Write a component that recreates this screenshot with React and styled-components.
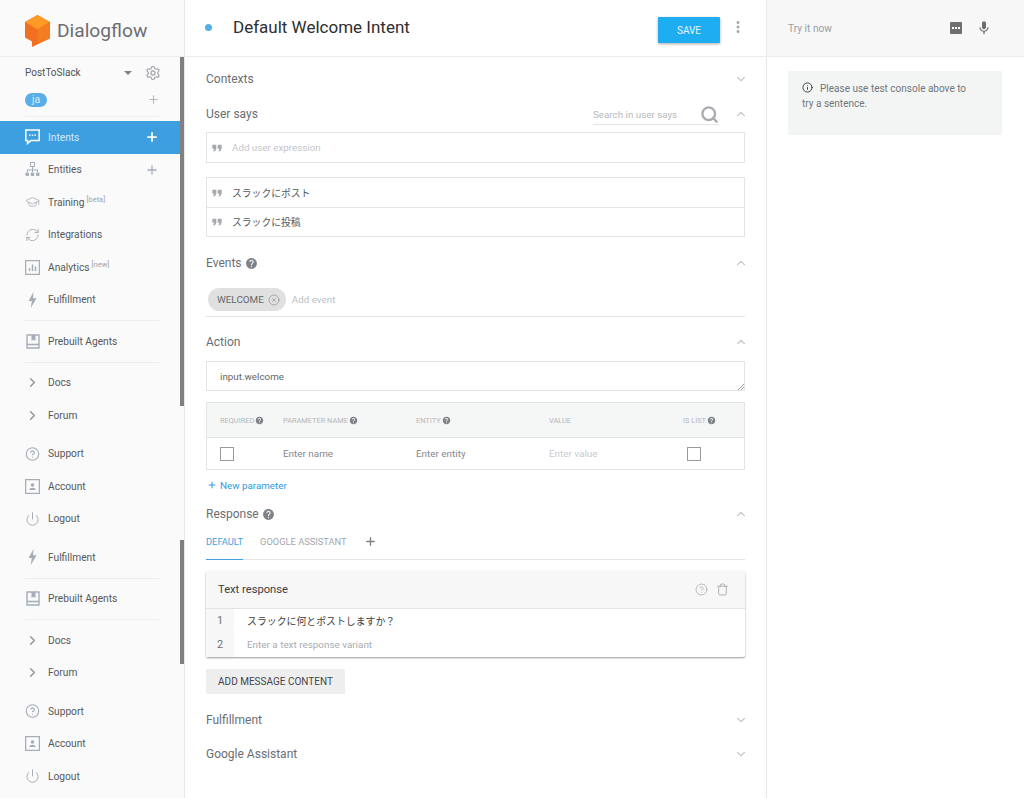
import React from 'react';
import styled, { createGlobalStyle } from 'styled-components';
import { ChevronDown, ChevronUp, ChevronRight, CircleHelp, Power, Search, RefreshCw, GraduationCap, Plus, Trash, CircleX, Info, Settings } from 'lucide-react';
import { MdHelp, MdMic, MdMoreVert, MdFormatQuote } from 'react-icons/md';

const GlobalStyle = createGlobalStyle`
  html, body {
    margin: 0;
    padding: 0;
    height: 100%;
    overflow: hidden;
    background: #ffffff;
    font-family: Roboto, "Noto Sans CJK JP", sans-serif;
  }
  * { box-sizing: border-box; }
`;

const Page = styled.div`
  display: flex;
  width: 1024px;
  height: 798px;
  overflow: hidden;
`;

const Sidebar = styled.aside`
  position: relative;
  width: 185px;
  flex-shrink: 0;
  background: #fafafa;
  border-right: 1px solid #e8e8e8;
`;

const Logo = styled.div`
  display: flex;
  align-items: center;
  gap: 7px;
  height: 57px;
  padding: 5px 0 0 25px;
  border-bottom: 1px solid #ececec;
  font-size: 19.2px;
  color: #6b6e72;
`;

const AgentRow = styled.div`
  display: flex;
  align-items: center;
  height: ${p => p.$h}px;
  margin: 0 25px;
  padding-bottom: ${p => (p.$line ? '5px' : '0')};
  font-size: 10px;
  color: #4f5357;
  border-bottom: ${p => (p.$line ? '1px solid #ececec' : 'none')};
`;

const AgentName = styled.span`
  flex: 1;
`;

const Caret = styled.span`
  width: 0;
  height: 0;
  margin-right: 13px;
  border-left: 4px solid transparent;
  border-right: 4px solid transparent;
  border-top: 4px solid #7f8388;
`;

const GearIcon = styled(Settings)`
  margin-right: -2px;
`;

const LangPlus = styled(Plus)`
  margin-right: -1px;
`;

const LangPill = styled.span`
  width: 22px;
  height: 14px;
  margin-right: auto;
  border-radius: 7px;
  background: #5aaee8;
  color: #d9edfb;
  font-size: 10.5px;
  line-height: 14px;
  text-align: center;
`;

const NavRow = styled.div`
  display: flex;
  align-items: center;
  height: 32.5px;
  padding: 0 25px;
  background: ${p => (p.$active ? '#3d9fdf' : 'transparent')};
  color: ${p => (p.$active ? '#d5e9f7' : '#54585c')};
  font-size: 10.2px;
`;

const NavIcon = styled.span`
  display: flex;
  align-items: center;
  justify-content: center;
  width: 15px;
  height: 16px;
  margin-right: 8px;
  color: ${p => (p.$active ? '#ffffff' : '#a6adb8')};
`;

const NavLabel = styled.span`
  flex: 1;
  margin-top: ${p => (p.$low ? '1px' : '0')};
`;

const Sup = styled.sup`
  margin-left: 2px;
  font-size: 7.5px;
  line-height: 0;
  color: #a0a4a8;
  vertical-align: 4px;
`;

const NavDivider = styled.div`
  height: 1px;
  margin: 4px 25px;
  background: #ececec;
`;

const NavGap = styled.div`
  height: ${p => p.$h}px;
`;

const ScrollThumb = styled.div`
  position: absolute;
  right: 0;
  top: ${p => p.$top}px;
  width: 4px;
  height: ${p => p.$h}px;
  background: #808080;
`;

const Main = styled.main`
  width: 582px;
  flex-shrink: 0;
  display: flex;
  flex-direction: column;
  border-right: 1px solid #e8e8e8;
`;

const MainHeader = styled.header`
  display: flex;
  align-items: center;
  height: 57px;
  padding: 0 21px 2px 20px;
  border-bottom: 1px solid #ececec;
`;

const Dot = styled.span`
  width: 7px;
  height: 7px;
  margin-right: 21px;
  border-radius: 50%;
  background: #5aaee8;
`;

const Title = styled.h1`
  flex: 1;
  margin: 0;
  font-size: 17px;
  font-weight: 400;
  color: #2e2e2e;
`;

const SaveButton = styled.button`
  width: 62px;
  height: 26px;
  margin: 6px 9px 0 0;
  border: 0;
  border-radius: 1px;
  background: #1fadf2;
  color: #e6f5fd;
  font-family: inherit;
  font-size: 10px;
  box-shadow: 0 1px 3px rgba(0, 0, 0, 0.35);
`;

const MoreIcon = styled(MdMoreVert)`
  margin-right: -2px;
`;

const Body = styled.div`
  padding: 0 21px;
`;

const SectionHead = styled.div`
  display: flex;
  align-items: center;
  height: 20px;
  margin-top: ${p => p.$mt || 0}px;
  font-size: 12px;
  color: #6a6e73;
`;

const SectionTitle = styled.span`
  flex: 1;
  display: flex;
  align-items: center;
  gap: 3px;
`;

const SectionArrow = styled.span`
  display: flex;
  margin-right: -3px;
  color: #c8cacd;
`;

const SearchBox = styled.div`
  display: flex;
  align-items: center;
  justify-content: space-between;
  width: 126px;
  height: 20px;
  margin: 2px 15px 0 0;
  border-bottom: 1px solid #e6e6e6;
  font-size: 9.8px;
  color: #b5b8bc;
`;

const Box = styled.div`
  border: 1px solid #e4e4e4;
  margin-top: ${p => p.$mt || 0}px;
`;

const QuoteRow = styled.div`
  display: flex;
  align-items: center;
  gap: 7px;
  height: 29px;
  padding-left: 2px;
  font-size: 9.8px;
  color: ${p => (p.$ghost ? '#c4c6ca' : '#55585c')};
  border-top: ${p => (p.$line ? '1px solid #e4e4e4' : '0')};
  svg { color: #a6a9ae; }
`;

const EventLine = styled.div`
  display: flex;
  align-items: center;
  height: 29px;
  margin-top: 15px;
  padding: 0 0 5px 2px;
  border-bottom: 1px solid #e6e6e6;
`;

const Chip = styled.span`
  display: flex;
  align-items: center;
  gap: 4px;
  height: 23px;
  padding: 0 6px 0 9px;
  border-radius: 12px;
  background: #e0e0e0;
  font-size: 9.9px;
  color: #65696e;
`;

const Ghost = styled.span`
  margin-left: 6px;
  font-size: 9.8px;
  color: #bdbfc3;
`;

const ActionInput = styled.div`
  position: relative;
  display: flex;
  align-items: flex-start;
  height: 30px;
  margin-top: 9px;
  padding: 9px 13px 0;
  border: 1px solid #e4e4e4;
  font-size: 9.8px;
  color: #63676b;
`;

const Grip = styled.svg`
  position: absolute;
  right: 0;
  bottom: 0;
`;

const ParamGrid = styled.div`
  display: grid;
  grid-template-columns: 63px 133px 133px 134px 1fr;
  align-items: center;
  height: ${p => p.$h}px;
  padding-left: 13px;
  background: ${p => (p.$head ? '#f5f6f6' : '#ffffff')};
  border-bottom: ${p => (p.$head ? '1px solid #e4e4e4' : '0')};
`;

const ParamHead = styled.span`
  display: flex;
  align-items: center;
  gap: 1px;
  font-size: 7.4px;
  color: #b4b7bb;
`;

const ParamCell = styled.span`
  font-size: 9.9px;
  color: ${p => (p.$light ? '#c9cbce' : '#85888d')};
`;

const Checkbox = styled.span`
  display: block;
  width: 14px;
  height: 14px;
  margin-left: ${p => p.$ml || 0}px;
  border: 1px solid #9a9a9a;
`;

const NewParam = styled.div`
  display: flex;
  align-items: center;
  gap: 3px;
  height: 30px;
  padding-left: 1px;
  font-size: 9.8px;
  color: #2a9be6;
`;

const Tabs = styled.div`
  display: flex;
  align-items: center;
  height: 31px;
  margin-top: 5px;
  border-bottom: 1px solid #e4e4e4;
  font-size: 9.3px;
  color: #a3a6ab;
`;

const Tab = styled.span`
  display: flex;
  align-items: center;
  height: 31px;
  margin-bottom: -1px;
  padding-bottom: 6px;
  margin-right: ${p => p.$mr}px;
  color: ${p => (p.$active ? '#3d9fdf' : 'inherit')};
  border-bottom: ${p => (p.$active ? '1px solid #3d9fdf' : '0')};
`;

const TabPlus = styled(Plus)`
  margin-bottom: 6px;
  color: #7e8388;
`;

const Card = styled.section`
  margin-top: 11px;
  border-radius: 2px;
  box-shadow: 0 1px 2px rgba(0, 0, 0, 0.4);
`;

const CardHead = styled.div`
  display: flex;
  align-items: center;
  gap: 8px;
  height: 38px;
  padding: 0 16px 0 12px;
  background: #f7f7f7;
  border-bottom: 1px solid #e4e4e4;
  font-size: 11.2px;
  color: #3b3e41;
  svg { color: #a5a8ad; }
`;

const CardTitle = styled.span`
  flex: 1;
`;

const VariantRow = styled.div`
  display: flex;
  height: 24px;
  font-size: 9.9px;
  color: ${p => (p.$ghost ? '#a9acb0' : '#3b3e41')};
`;

const VariantNum = styled.span`
  width: 28px;
  padding: 5px 0 0 11px;
  background: #f7f7f7;
  color: #6f7276;
  font-size: 11px;
`;

const VariantText = styled.span`
  padding: ${p => p.$top}px 0 0 13px;
  line-height: 14px;
`;

const AddButton = styled.button`
  display: block;
  width: 139px;
  height: 25px;
  margin-top: 12px;
  border: 0;
  background: #eeeeee;
  color: #44474a;
  font-family: inherit;
  font-size: 10px;
`;

const Aside = styled.aside`
  flex: 1;
  background: #ffffff;
`;

const TryBar = styled.div`
  display: flex;
  align-items: center;
  height: 57px;
  padding: 0 32px 0 21px;
  background: #f7f7f7;
  border-bottom: 1px solid #ececec;
  font-size: 10.2px;
  color: #9a9da1;
`;

const TryLabel = styled.span`
  flex: 1;
`;

const KeyIcon = styled.span`
  display: flex;
  align-items: center;
  justify-content: center;
  gap: 1px;
  width: 12px;
  height: 12px;
  margin-right: 14px;
  border-radius: 1px;
  background: #6f6f6f;
  i {
    width: 2px;
    height: 2px;
    background: #fff;
  }
`;

const Notice = styled.div`
  width: 214px;
  height: 64px;
  margin: 14px 0 0 21px;
  padding: 11px 30px 10px 14px;
  background: #f3f5f5;
  font-size: 10px;
  line-height: 14.5px;
  color: #72767a;
  svg {
    margin-right: 7px;
    color: #333;
    vertical-align: -1px;
  }
`;

const LogoMark = () => (
  <svg width="25" height="32" viewBox="0 0 25 32">
    <path d="M12.500 0 L25 7 V23.500 L7 32 V26.500 L0 22.500 V7 Z" fill="#f26f21" />
    <path d="M12.500 0 L25 7 L12.500 14.500 L0 7 Z" fill="#ff9a25" />
    <path d="M25 7 L12.500 14.500 V29 L25 23 Z" fill="#f47d22" />
  </svg>
);

const ChatIcon = () => (
  <svg width="15" height="16" viewBox="0 0 15 16" fill="none" stroke="currentColor" strokeWidth="1.6">
    <path d="M0.800 1h13.400v10.500H6L2.500 14.500V11.500H0.800z" />
    <path d="M4 6.300h1.500M6.800 6.300h1.500M9.500 6.300h1.500" strokeWidth="1.500" />
  </svg>
);

const OrgIcon = () => (
  <svg width="15" height="15" viewBox="0 0 15 15" fill="currentColor">
    <rect x="5.500" y="0.500" width="4" height="4" fill="none" stroke="currentColor" />
    <path d="M7 5h1v2.500h5V10h-1V8.500H8V10H7V8.500H3V10H2V7.500h5z" />
    <rect x="0.500" y="10.500" width="3.500" height="3.500" rx="1" />
    <rect x="5.750" y="10.500" width="3.500" height="3.500" rx="1" />
    <rect x="11" y="10.500" width="3.500" height="3.500" rx="1" />
  </svg>
);

const BarsIcon = () => (
  <svg width="15" height="15" viewBox="0 0 15 15" fill="none" stroke="currentColor" strokeWidth="1.300">
    <rect x="0.600" y="0.600" width="13.800" height="13.800" />
    <path d="M4.500 11V8M7.500 11V4.500M10.500 11V6.500" strokeWidth="1.500" />
  </svg>
);

const BookIcon = () => (
  <svg width="14" height="15" viewBox="0 0 14 15" fill="none" stroke="currentColor" strokeWidth="1.400">
    <path d="M1 1h12v13H1z M1 10.500h12" />
    <path d="M5.500 1h4v6L7.500 5.700 5.500 7z" fill="currentColor" stroke="none" />
  </svg>
);

const PersonIcon = () => (
  <svg width="15" height="15" viewBox="0 0 15 15" fill="none" stroke="currentColor" strokeWidth="1.300">
    <rect x="0.600" y="0.600" width="13.800" height="13.800" />
    <circle cx="7.500" cy="6" r="1.800" fill="currentColor" stroke="none" />
    <path d="M4.300 11c0-3 6.400-3 6.400 0z" fill="currentColor" stroke="none" />
  </svg>
);

const BoltIcon = () => (
  <svg width="9" height="16" viewBox="0 0 9 16" fill="currentColor">
    <path d="M5.500 0 L0.500 9 H3.800 L2.800 16 L8.500 6.200 H5z" />
  </svg>
);

const NavItem = ({ icon, label, sup, low, active, plus }) => (
  <NavRow $active={active}>
    <NavIcon $active={active}>{icon}</NavIcon>
    <NavLabel $low={low}>
      {label}
      {sup && <Sup>[{sup}]</Sup>}
    </NavLabel>
    {plus && <Plus size={14} strokeWidth={active ? 3 : 2.2} color={active ? '#ffffff' : '#a6adb8'} />}
  </NavRow>
);

const lowerNav = (
  <>
    <NavItem icon={<BoltIcon />} label="Fulfillment" />
    <NavDivider />
    <NavItem icon={<BookIcon />} label="Prebuilt Agents" />
    <NavDivider />
    <NavItem icon={<ChevronRight size={15} strokeWidth={2.2} color="#8e939b" />} label="Docs" />
    <NavItem icon={<ChevronRight size={15} strokeWidth={2.2} color="#8e939b" />} label="Forum" />
    <NavGap $h={6} />
    <NavItem icon={<CircleHelp size={16} strokeWidth={1.8} />} label="Support" />
    <NavItem icon={<PersonIcon />} label="Account" />
    <NavItem icon={<Power size={16} strokeWidth={1.6} />} label="Logout" />
  </>
);

const Head = ({ title, help, mt, open, children }) => {
  const Arrow = open ? ChevronUp : ChevronDown;
  return (
    <SectionHead $mt={mt}>
      <SectionTitle>
        {title}
        {help && <MdHelp size={13} color="#7e8388" />}
      </SectionTitle>
      {children}
      <SectionArrow>
        <Arrow size={14} />
      </SectionArrow>
    </SectionHead>
  );
};

const paramHeads = [
  { label: 'REQUIRED', help: true },
  { label: 'PARAMETER NAME', help: true },
  { label: 'ENTITY', help: true },
  { label: 'VALUE' },
  { label: 'IS LIST', help: true },
];

export default function App() {
  return (
    <Page>
      <GlobalStyle />
      <Sidebar>
        <Logo>
          <LogoMark />
          Dialogflow
        </Logo>
        <AgentRow $h={31}>
          <AgentName>PostToSlack</AgentName>
          <Caret />
          <GearIcon size={16} strokeWidth={2} color="#a8abaf" />
        </AgentRow>
        <AgentRow $h={29} $line>
          <LangPill>ja</LangPill>
          <LangPlus size={13} strokeWidth={2} color="#b5b8bc" />
        </AgentRow>
        <NavGap $h={4} />
        <NavItem active plus icon={<ChatIcon />} label="Intents" />
        <NavItem plus icon={<OrgIcon />} label="Entities" />
        <NavItem low icon={<GraduationCap size={18} strokeWidth={1.3} />} label="Training" sup="beta" />
        <NavItem icon={<RefreshCw size={16} strokeWidth={1.5} />} label="Integrations" />
        <NavItem low icon={<BarsIcon />} label="Analytics" sup="new" />
        {lowerNav}
        <NavGap $h={6} />
        {lowerNav}
        <ScrollThumb $top={57} $h={349} />
        <ScrollThumb $top={540} $h={124} />
      </Sidebar>

      <Main>
        <MainHeader>
          <Dot />
          <Title>Default Welcome Intent</Title>
          <SaveButton>SAVE</SaveButton>
          <MoreIcon size={18} color="#a6a9ae" />
        </MainHeader>
        <Body>
          <Head title="Contexts" mt={12} />
          <Head title="User says" mt={15} open>
            <SearchBox>
              Search in user says
              <Search size={19} strokeWidth={3} color="#a9acb0" />
            </SearchBox>
          </Head>
          <Box $mt={8}>
            <QuoteRow $ghost>
              <MdFormatQuote size={16} />
              <span>Add user expression</span>
            </QuoteRow>
          </Box>
          <Box $mt={14}>
            <QuoteRow>
              <MdFormatQuote size={16} />
              <span>スラックにポスト</span>
            </QuoteRow>
            <QuoteRow $line>
              <MdFormatQuote size={16} />
              <span>スラックに投稿</span>
            </QuoteRow>
          </Box>
          <Head title="Events" help mt={16} open />
          <EventLine>
            <Chip>
              WELCOME
              <CircleX size={12} strokeWidth={1.2} color="#7e8388" />
            </Chip>
            <Ghost>Add event</Ghost>
          </EventLine>
          <Head title="Action" mt={15} open />
          <ActionInput>
            input.welcome
            <Grip width="7" height="7" viewBox="0 0 7 7" stroke="#777" strokeWidth="0.7">
              <path d="M1 7L7 1M4 7L7 4" />
            </Grip>
          </ActionInput>
          <Box $mt={11}>
            <ParamGrid $head $h={35}>
              {paramHeads.map(head => (
                <ParamHead key={head.label}>
                  {head.label}
                  {head.help && <MdHelp size={9} color="#7e8388" />}
                </ParamHead>
              ))}
            </ParamGrid>
            <ParamGrid $h={31}>
              <Checkbox />
              <ParamCell>Enter name</ParamCell>
              <ParamCell>Enter entity</ParamCell>
              <ParamCell $light>Enter value</ParamCell>
              <Checkbox $ml={4} />
            </ParamGrid>
          </Box>
          <NewParam>
            <Plus size={10} strokeWidth={2.4} />
            New parameter
          </NewParam>
          <Head title="Response" help mt={4} open />
          <Tabs>
            <Tab $active $mr={17}>DEFAULT</Tab>
            <Tab $mr={17}>GOOGLE ASSISTANT</Tab>
            <TabPlus size={13} strokeWidth={2.5} />
          </Tabs>
          <Card>
            <CardHead>
              <CardTitle>Text response</CardTitle>
              <CircleHelp size={13} strokeWidth={1.4} />
              <Trash size={13} strokeWidth={1.6} />
            </CardHead>
            <VariantRow>
              <VariantNum>1</VariantNum>
              <VariantText $top={6}>スラックに何とポストしますか？</VariantText>
            </VariantRow>
            <VariantRow $ghost>
              <VariantNum>2</VariantNum>
              <VariantText $top={5}>Enter a text response variant</VariantText>
            </VariantRow>
          </Card>
          <AddButton>ADD MESSAGE CONTENT</AddButton>
          <Head title="Fulfillment" mt={16} />
          <Head title="Google Assistant" mt={14} />
        </Body>
      </Main>

      <Aside>
        <TryBar>
          <TryLabel>Try it now</TryLabel>
          <KeyIcon><i /><i /><i /></KeyIcon>
          <MdMic size={16} color="#6f6f6f" />
        </TryBar>
        <Notice>
          <Info size={11} strokeWidth={2} />
          Please use test console above to try a sentence.
        </Notice>
      </Aside>
    </Page>
  );
}
